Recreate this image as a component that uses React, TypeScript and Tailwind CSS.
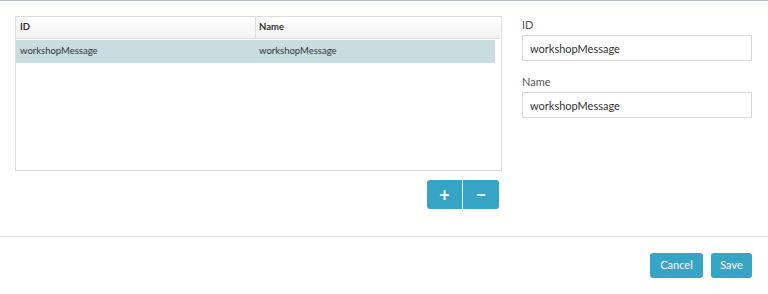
import React from 'react'

function Field({ label, value }: { label: string; value: string }) {
  return (
    <div className="flex flex-col">
      <label className="h-[18px] text-[11px] leading-[18px] text-[#555]">{label}</label>
      <input
        readOnly
        value={value}
        className="mt-px h-[26px] w-[230px] border border-[#d9d9d9] bg-white px-[7px] text-[11px] text-[#333] outline-none"
      />
    </div>
  )
}

export default function App() {
  const rows = [{ id: 'workshopMessage', name: 'workshopMessage' }]
  return (
    <div
      className="h-[294px] w-[768px] overflow-hidden border-t border-[#b8bfc9] bg-white text-[#333]"
      style={{ fontFamily: 'Lato, "Open Sans", sans-serif' }}
    >
      <div className="flex h-[236px] gap-[20px] border-b border-[#e3e3e3] px-[15px] pt-[15px]">
        <div className="flex w-[487px] flex-col">
          <div className="h-[155px] border border-[#dcdcdc] pr-[1px]">
            <div className="flex h-[22px] border-b border-[#dcdcdc] bg-gradient-to-b from-white to-[#f1f1f1] text-[9.5px] font-bold">
              <div className="flex w-[240px] items-center border-r border-[#dcdcdc] pl-[4px]">ID</div>
              <div className="flex flex-1 items-center pl-[3px]">Name</div>
            </div>
            {rows.map((r) => (
              <div key={r.id} className="mr-[5px] mt-px flex h-[23px] bg-[#c9dde1] text-[9.5px]">
                <div className="flex w-[240px] items-center pl-[4px]">{r.id}</div>
                <div className="flex flex-1 items-center pl-[3px]">{r.name}</div>
              </div>
            ))}
          </div>
          <div className="mr-[3px] mt-[9px] flex justify-end">
            <div className="flex h-[29px] overflow-hidden rounded-[3px] bg-[#36a4c5] text-white">
              <button className="flex w-[36px] items-center justify-center border-r border-[#e6f3f7] text-[18px] font-bold leading-none">
                +
              </button>
              <button className="flex w-[36px] items-center justify-center text-[18px] font-bold leading-none">
                −
              </button>
            </div>
          </div>
        </div>
        <div className="flex flex-col gap-[12px]">
          <Field label="ID" value="workshopMessage" />
          <Field label="Name" value="workshopMessage" />
        </div>
      </div>
      <div className="flex justify-end gap-[8px] pr-[16px] pt-[16px]">
        <button className="h-[25px] w-[53px] rounded-[3px] bg-[#36a4c5] text-[11px] text-white">Cancel</button>
        <button className="h-[25px] w-[41px] rounded-[3px] bg-[#36a4c5] text-[11px] text-white">Save</button>
      </div>
    </div>
  )
}
